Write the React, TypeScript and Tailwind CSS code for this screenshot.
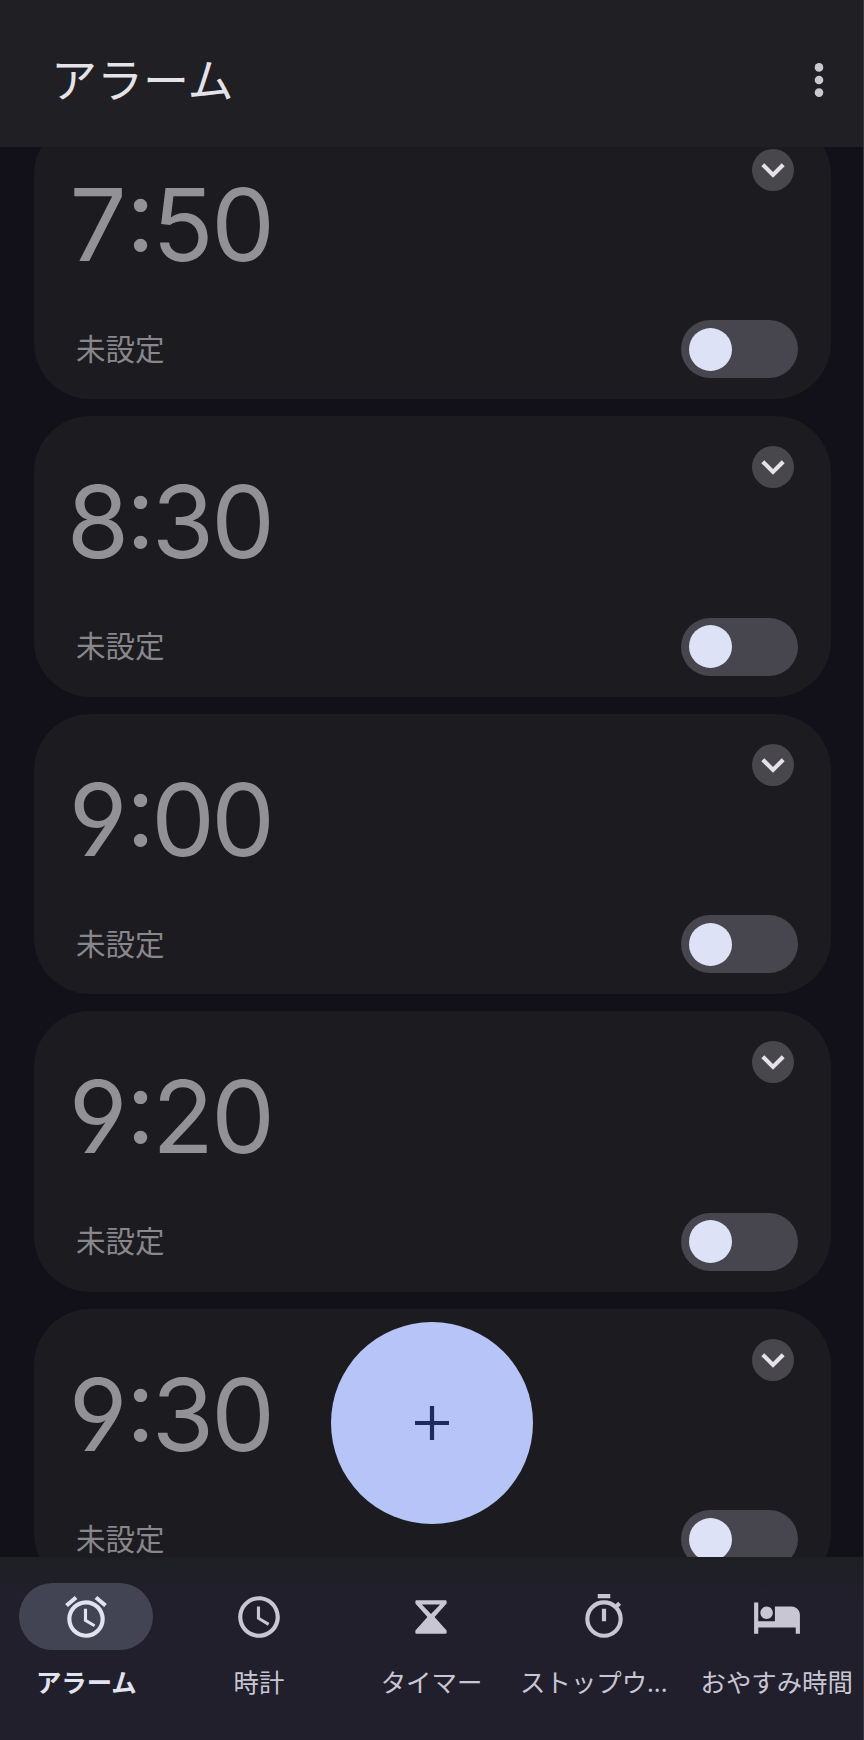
import { useState } from "react";
import { MdAlarm, MdHotel, MdSchedule } from "react-icons/md";

const ALARMS = [
  { id: 1, time: "7:50" },
  { id: 2, time: "8:30" },
  { id: 3, time: "9:00" },
  { id: 4, time: "9:20" },
  { id: 5, time: "9:30" },
];

export default function App() {
  return (
    <div className="relative flex flex-col w-[864px] h-[1740px] overflow-hidden border-r border-[#3a3a3e] bg-[#12111a] font-['Noto_Sans','Noto_Sans_CJK_JP',sans-serif]">
      <Header />
      <main className="flex-1 min-h-0 overflow-hidden pl-[34px] pr-[32px]">
        <div className="flex flex-col gap-[17px] -mt-[28.5px]">
          {ALARMS.map((a) => (
            <AlarmCard key={a.id} time={a.time} />
          ))}
        </div>
      </main>
      <AddButton />
      <BottomNav />
    </div>
  );
}

function Header() {
  return (
    <header className="relative z-10 flex items-center justify-between h-[147px] shrink-0 pl-[51px] pr-[39px] pb-[1px] bg-[#1f1f24]">
      <h1 className="mt-[8px] text-[46px] leading-[60px] text-[#e5e3ea] font-['Noto_Sans_CJK_JP',sans-serif]">
        アラーム
      </h1>
      <button className="mt-[14px]" aria-label="menu">
        <svg width="10" height="36" viewBox="0 0 10 36" fill="#cbc9d0">
          <circle cx="5" cy="5.4" r="4.3" />
          <circle cx="5" cy="18" r="4.3" />
          <circle cx="5" cy="30.6" r="4.3" />
        </svg>
      </button>
    </header>
  );
}

function AlarmCard({ time }: { time: string }) {
  const [on, setOn] = useState(false);

  return (
    <section className="flex flex-col justify-between h-[280.5px] shrink-0 rounded-[56px] bg-[#1c1b1f] pt-[30px] pb-[21px] pl-[34px] pr-[33px]">
      <div className="flex items-start justify-between">
        <div className="mt-[15px] flex text-[101px] leading-[120px] font-[370] text-[#929196] font-['Inter',sans-serif] [font-feature-settings:'cv04']">
          {time.split("").map((c, i) => (
            <span
              key={i}
              className={
                c === ":"
                  ? "relative -top-[10px] flex justify-center w-[25px]"
                  : "flex justify-center w-[60px]"
              }
            >
              {c}
            </span>
          ))}
        </div>
        <button
          className="flex items-center justify-center size-[42px] mr-[4.5px] rounded-full bg-[#48474c]"
          aria-label="expand"
        >
          <svg width="24" height="16" viewBox="0 0 24 16" fill="none" stroke="#e5e3e9" strokeWidth="4.2">
            <path d="M1.8 2.7 12 12.9 22.2 2.7" />
          </svg>
        </button>
      </div>
      <div className="flex items-center justify-between">
        <span className="pl-[8px] -mt-[5px] text-[29.5px] leading-[40px] text-[#88878c] font-['Noto_Sans_CJK_JP',sans-serif]">
          未設定
        </span>
        <button
          onClick={() => {
            setOn(!on);
          }}
          className={`flex items-center w-[117px] h-[58px] px-[8px] rounded-full bg-[#47464e] ${
            on ? "justify-end" : "justify-start"
          }`}
          aria-label="toggle"
        >
          <span className="size-[43px] rounded-full bg-[#dde2f6]"></span>
        </button>
      </div>
    </section>
  );
}

function AddButton() {
  return (
    <button
      className="absolute left-[331px] top-[1322px] z-10 flex items-center justify-center size-[202px] rounded-full bg-[#b6c4f8]"
      aria-label="add"
    >
      <svg width="34" height="34" viewBox="0 0 34 34" stroke="#1d2a60" strokeWidth="4.2">
        <path d="M17 0v34M0 17h34" />
      </svg>
    </button>
  );
}

function HourglassIcon() {
  return (
    <svg width="50" height="50" viewBox="0 0 24 24" fill="currentColor">
      <path
        fillRule="evenodd"
        d="M5 4h14q.5 0 .5.5v1L13.7 12l5.8 6.5v1q0 .5-.5.5H5q-.5 0-.5-.5v-1L10.3 12 4.5 5.5v-1Q4.5 4 5 4ZM7.6 6 12 10.5 16.4 6Z"
      />
    </svg>
  );
}

function StopwatchIcon() {
  return (
    <svg width="50" height="50" viewBox="0 0 24 24" fill="none" stroke="currentColor" strokeWidth="2">
      <circle cx="12" cy="13" r="8" />
      <path d="M9 2h6M12 8v6M17.3 7.6l2.2-2.2" />
    </svg>
  );
}

function BottomNav() {
  return (
    <nav className="relative grid grid-cols-5 h-[183px] shrink-0 pt-[26px] bg-linear-to-b from-[#1e1f22] to-[#201f2b] to-20% text-[#c9c6d4]">
      <div className="flex flex-col items-center text-[#e3e2f0]">
        <div className="flex items-center justify-center w-[134px] h-[67px] rounded-full bg-[#434453]">
          <MdAlarm size={50} />
        </div>
        <NavLabel bold>アラーム</NavLabel>
      </div>
      <NavItem icon={<MdSchedule size={50} />} label="時計" />
      <NavItem icon={<HourglassIcon />} label="タイマー" />
      <div className="flex flex-col items-center">
        <div className="flex items-center h-[67px]">
          <StopwatchIcon />
        </div>
        <div className="w-[168px]">
          <NavLabel>ストップウ...</NavLabel>
        </div>
      </div>
      <NavItem icon={<MdHotel size={50} />} label="おやすみ時間" />
    </nav>
  );
}

function NavItem({ icon, label }: { icon: React.ReactNode; label: string }) {
  return (
    <div className="flex flex-col items-center">
      <div className="flex items-center h-[67px]">{icon}</div>
      <NavLabel>{label}</NavLabel>
    </div>
  );
}

function NavLabel({
  bold,
  children,
}: {
  bold?: boolean;
  children: React.ReactNode;
}) {
  return (
    <p
      className={`mt-[14px] text-[25.4px] leading-[36px] whitespace-nowrap ${
        bold ? "font-bold" : ""
      }`}
    >
      {children}
    </p>
  );
}
